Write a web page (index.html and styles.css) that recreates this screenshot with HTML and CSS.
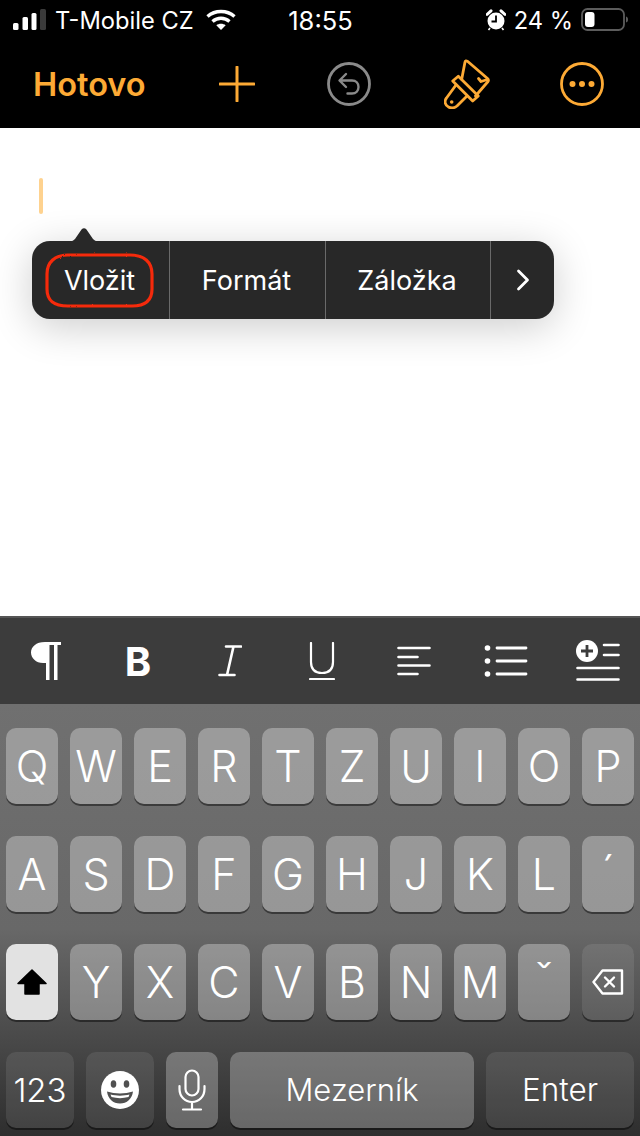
FILE: index.html
```html
<!DOCTYPE html>
<html lang="cs">
  <head>
    <meta charset="UTF-8" />
    <meta name="viewport" content="width=device-width, initial-scale=1.0" />
    <title>Pages</title>
    <link rel="stylesheet" href="styles.css">
  </head>
  <body>
    <div class="phone">
      <div class="top">
        <div class="status">
          <div class="status-left">
            <svg class="signal" width="33" height="22" viewBox="0 0 33 22">
              <rect x="0" y="14" width="5.500" height="7" rx="1.500" fill="#fff"/>
              <rect x="9.500" y="8" width="5.500" height="13" rx="1.500" fill="#fff"/>
              <rect x="18.500" y="4" width="5" height="17" rx="1.500" fill="#fff"/>
              <rect x="27" y="0" width="6" height="21" rx="1.500" fill="#3a3a3a"/>
            </svg>
            <span class="carrier">T-Mobile CZ</span>
            <svg class="wifi" width="30" height="22" viewBox="0 0 30 22" fill="none" stroke="#fff" stroke-width="3.400">
              <path d="M1.500 7.500C9 .8 21 .8 28.500 7.500"/>
              <path d="M6.500 12.500C11.500 8.200 18.500 8.200 23.500 12.500"/>
              <path d="M15 21l-4.700-4.800c2.700-2 6.700-2 9.400 0z" fill="#fff" stroke="none"/>
            </svg>
          </div>
          <div class="status-time">18:55</div>
          <div class="status-right">
            <svg width="20" height="22" viewBox="0 0 20 22">
              <circle cx="10" cy="12" r="8.500" fill="#fff"/>
              <path d="M10 6.500V12.500H5.500" fill="none" stroke="#000" stroke-width="1.800"/>
              <path d="M1 5.500L5 1.800M19 5.500L15 1.800" stroke="#fff" stroke-width="3" stroke-linecap="round"/>
              <path d="M4 19l-1.500 2M16 19l1.500 2" stroke="#fff" stroke-width="1.600"/>
            </svg>
            <span class="battery-text">24 %</span>
            <svg width="47" height="24" viewBox="0 0 47 24">
              <rect x="1" y="1" width="42" height="21" rx="5.500" fill="none" stroke="#5c5c5c" stroke-width="1.800"/>
              <rect x="4" y="4" width="9.500" height="15" rx="3" fill="#fff"/>
              <path d="M45 8.500c1.600.5 2 1.500 2 3s-.4 2.500-2 3z" fill="#5c5c5c"/>
            </svg>
          </div>
        </div>
        <div class="toolbar">
          <span class="done">Hotovo</span>
          <svg class="tool-plus" width="36" height="36" viewBox="0 0 36 36" stroke="#fdaa35" stroke-width="3" stroke-linecap="round">
            <path d="M18 1V35M1 18H35"/>
          </svg>
          <svg class="tool-undo" width="44" height="44" viewBox="0 0 44 44" fill="none" stroke="#8a8a8a" stroke-width="2.800">
            <circle cx="22" cy="22" r="20.500"/>
            <path d="M19 12L12.500 18.500l6.500 6.500M13 18.500H25c4 0 6.500 3 6.500 6.500S29 31.500 25 31.500h-4.500" stroke-width="2.400" stroke-linecap="round" stroke-linejoin="round"/>
          </svg>
          <svg class="tool-brush" width="46" height="50" viewBox="0 0 46 50" fill="none" stroke="#fdaa35" stroke-width="2.800" stroke-linejoin="round" stroke-linecap="round">
            <path d="M17.700 20.300L21 3Q21.500 1 23.500 2.300L43.500 19.500Q45 21 44 22.500L31.500 37"/>
            <path d="M34.500 19.500L37 22.500L43.500 20.500"/>
            <path d="M8.700 22L14.300 17.300L34.300 37L28.700 42z"/>
            <path d="M12 26L2.500 39C0 42 1 46.500 4.500 48C7.500 49.500 10.500 49 13 47L23 37"/>
            <circle cx="7.700" cy="43" r="1.800" fill="#fdaa35" stroke="none"/>
          </svg>
          <svg class="tool-more" width="44" height="44" viewBox="0 0 44 44" fill="none" stroke="#fdaa35" stroke-width="2.800">
            <circle cx="22" cy="22" r="20.500"/>
            <circle cx="12.500" cy="22" r="3" fill="#fdaa35" stroke="none"/>
            <circle cx="22" cy="22" r="3" fill="#fdaa35" stroke="none"/>
            <circle cx="31.500" cy="22" r="3" fill="#fdaa35" stroke="none"/>
          </svg>
        </div>
      </div>

      <div class="document">
        <div class="caret"></div>
        <div class="menu">
          <svg class="menu-arrow" width="34" height="15" viewBox="0 0 34 15">
            <path d="M0 15C4 15 6 14 8 12L14.500 2.500Q17 0 19.500 2.500L26 12C28 14 30 15 34 15z" fill="#282828"/>
          </svg>
          <div class="menu-item menu-paste">Vložit</div>
          <div class="menu-item menu-format">Formát</div>
          <div class="menu-item menu-bookmark">Záložka</div>
          <div class="menu-item menu-next">
            <svg width="14" height="22" viewBox="0 0 14 22" fill="none" stroke="#fff" stroke-width="2.800" stroke-linecap="round" stroke-linejoin="round">
              <path d="M2.500 2l9 9-9 9"/>
            </svg>
          </div>
          <svg class="scribble" width="112" height="60" viewBox="0 0 112 60" fill="none" stroke="#f52a08" stroke-width="3.200">
            <filter id="rough" x="-5%" y="-5%" width="110%" height="110%">
              <feTurbulence type="fractalNoise" baseFrequency="0.5" numOctaves="2" seed="4"/>
              <feDisplacementMap in="SourceGraphic" scale="2"/>
            </filter>
            <path filter="url(#rough)" d="M24 3H86C100 3 108 10 108 22V37C108 49 100 54 88 54H24C10 54 3 49 3 37V22C3 10 11 3 24 3z"/>
          </svg>
        </div>
      </div>

      <div class="format-bar">
        <svg width="32" height="40" viewBox="0 0 32 40">
          <path d="M15 1H31V4H27.500V39H24V4H19.500V39H16V22H13C6 22 1 17 1 11.500S6 1 15 1z" fill="#fff"/>
        </svg>
        <span class="fmt-bold">B</span>
        <svg width="24" height="32" viewBox="0 0 24 32" fill="none" stroke="#fff" stroke-width="2.600" stroke-linecap="round">
          <path d="M8 1.500H23M1.500 30H16.500M15.500 1.500L9 30"/>
        </svg>
        <svg width="26" height="38" viewBox="0 0 26 38" fill="none" stroke="#fff" stroke-width="2.200" stroke-linecap="round">
          <path d="M2 1V20C2 27 6 31 13 31S24 27 24 20V1"/>
          <path d="M1 37H25"/>
        </svg>
        <svg width="34" height="30" viewBox="0 0 34 30" stroke="#fff" stroke-width="2.600" stroke-linecap="round">
          <path d="M1.500 2H32.500M1.500 11H20.500M1.500 19.500H32.500M1.500 28H20.500"/>
        </svg>
        <svg width="44" height="32" viewBox="0 0 44 32">
          <circle cx="3.500" cy="3" r="2.800" fill="#fff"/>
          <circle cx="3.500" cy="16" r="2.800" fill="#fff"/>
          <circle cx="3.500" cy="29" r="2.800" fill="#fff"/>
          <path d="M13 3H42M13 16H42M13 29H42" stroke="#fff" stroke-width="2.800" stroke-linecap="round"/>
        </svg>
        <svg width="44" height="42" viewBox="0 0 44 42">
          <circle cx="11" cy="11" r="11" fill="#fff"/>
          <path d="M11 5V17M5 11H17" stroke="#3c3c3c" stroke-width="2.800"/>
          <path d="M28 5H42.500M28 15H42.500M1.500 28H42.500M1.500 39.500H42.500" stroke="#fff" stroke-width="2.600" stroke-linecap="round"/>
        </svg>
      </div>

      <div class="keyboard">
        <div class="key-row">
          <div class="key">Q</div><div class="key">W</div><div class="key">E</div><div class="key">R</div><div class="key">T</div>
          <div class="key">Z</div><div class="key">U</div><div class="key">I</div><div class="key">O</div><div class="key">P</div>
        </div>
        <div class="key-row">
          <div class="key">A</div><div class="key">S</div><div class="key">D</div><div class="key">F</div><div class="key">G</div>
          <div class="key">H</div><div class="key">J</div><div class="key">K</div><div class="key">L</div><div class="key key-mark">´</div>
        </div>
        <div class="key-row">
          <div class="key key-shift">
            <svg width="30" height="26" viewBox="0 0 30 26">
              <path d="M15 1L29 14.500H22V25H8V14.500H1z" fill="#000" stroke="#000" stroke-width="1.500" stroke-linejoin="round"/>
            </svg>
          </div>
          <div class="key">Y</div><div class="key">X</div><div class="key">C</div><div class="key">V</div><div class="key">B</div>
          <div class="key">N</div><div class="key">M</div><div class="key key-mark">ˇ</div>
          <div class="key key-dark">
            <svg width="32" height="26" viewBox="0 0 32 26" fill="none" stroke="#fff" stroke-width="2.400" stroke-linejoin="round" stroke-linecap="round">
              <path d="M10.500 1.500H30V24.500H10.500L1.500 13z"/>
              <path d="M13 8.500l9 9M22 8.500l-9 9"/>
            </svg>
          </div>
        </div>
        <div class="key-row">
          <div class="key key-dark key-num">123</div>
          <div class="key key-dark key-emoji">
            <svg width="38" height="38" viewBox="0 0 38 38">
              <circle cx="19" cy="19" r="19" fill="#fff"/>
              <ellipse cx="12.500" cy="13" rx="2.800" ry="3.800" fill="#505050"/>
              <ellipse cx="25.500" cy="13" rx="2.800" ry="3.800" fill="#505050"/>
              <path d="M6 20.500C14 23 24 23 32 20.500C31 28 26 32.500 19 32.500S7 28 6 20.500z" fill="#505050"/>
              <path d="M9.500 23.500C15 25 23 25 28.500 23.500L27.500 26C22 27.500 16 27.500 10.500 26z" fill="#fff"/>
            </svg>
          </div>
          <div class="key key-mic">
            <svg width="28" height="42" viewBox="0 0 28 42" fill="none" stroke="#fff" stroke-width="2.200" stroke-linecap="round">
              <rect x="7.500" y="1.500" width="13" height="25" rx="6.500"/>
              <path d="M1.500 17V20C1.500 27.500 7 33 14 33S26.500 27.500 26.500 20V17M14 33V40M5 40.500H23"/>
            </svg>
          </div>
          <div class="key key-space">Mezerník</div>
          <div class="key key-dark key-enter">Enter</div>
        </div>
      </div>
    </div>
  </body>
</html>
```

FILE: styles.css
```css
body {
  margin: 0;
  font-family: Inter, Roboto, sans-serif;
  background: #fff;
  overflow: hidden;
}

.phone {
  width: 640px;
  height: 1136px;
  display: flex;
  flex-direction: column;
}

.top {
  height: 128px;
  background: #000;
  color: #fff;
}

.status {
  height: 40px;
  display: grid;
  grid-template-columns: 1fr auto 1fr;
  align-items: center;
  padding: 0 12px 0 13px;
  font-size: 23.700px;
}

.status-left {
  display: flex;
  align-items: center;
  gap: 9px;
}

.carrier {
  margin-right: 3px;
}

.status-time {
  font-size: 25.500px;
}

.status-right {
  display: flex;
  align-items: center;
  justify-content: flex-end;
  gap: 8px;
}

.toolbar {
  height: 88px;
  display: flex;
  align-items: center;
  padding: 0 0 2px 33px;
}

.done {
  width: 112px;
  font-size: 32.500px;
  font-weight: 600;
  white-space: nowrap;
  color: #fdaa35;
}

.tool-plus {
  margin-left: 74px;
}

.tool-undo {
  margin-left: 72px;
}

.tool-brush {
  margin-left: 73px;
}

.tool-more {
  margin-left: 70px;
}

.document {
  height: 488px;
  background: #fff;
  position: relative;
}

.caret {
  width: 4px;
  height: 36px;
  margin: 50px 0 0 39px;
  border-radius: 2px;
  background: #fed28f;
}

.menu {
  position: absolute;
  left: 32px;
  top: 113px;
  width: 522px;
  height: 78px;
  display: flex;
  background: #282828;
  border-radius: 18px;
  box-shadow: 0 8px 40px rgba(0, 0, 0, 0.2);
  color: #fff;
  font-size: 27px;
}

.menu-arrow {
  position: absolute;
  left: 35px;
  top: -14px;
}

.menu-item {
  display: flex;
  align-items: center;
  justify-content: center;
  border-right: 1px solid #6a6a6a;
  box-sizing: border-box;
}

.menu-paste {
  width: 138px;
  padding-right: 2px;
}

.menu-format {
  width: 156px;
  padding-right: 2px;
}

.menu-bookmark {
  width: 165px;
  padding-right: 2px;
}

.menu-next {
  flex: 1;
  border-right: none;
}

.scribble {
  position: absolute;
  left: 12px;
  top: 11px;
}

.format-bar {
  height: 88px;
  box-sizing: border-box;
  border-top: 2px solid #555;
  background: #3c3c3c;
  display: grid;
  grid-template-columns: repeat(7, 92px);
  align-items: center;
  justify-items: center;
}

.fmt-bold {
  font-size: 40px;
  font-weight: 700;
  color: #fff;
}

.keyboard {
  height: 432px;
  box-sizing: border-box;
  padding: 24px 6px 0;
  background: linear-gradient(#707070, #686868 52%, #2e2e2e);
  display: flex;
  flex-direction: column;
  gap: 32px;
}

.key-row {
  display: flex;
  gap: 12px;
}

.key {
  width: 52px;
  height: 76px;
  border-radius: 10px;
  background: rgba(255, 255, 255, 0.31);
  box-shadow: 0 2px 0 rgba(0, 0, 0, 0.45);
  display: flex;
  align-items: center;
  justify-content: center;
  color: #fff;
  font-size: 43px;
  font-weight: 300;
}

.key-mark {
  align-items: flex-start;
  padding-top: 8px;
  box-sizing: border-box;
  font-size: 46px;
}

.key-shift {
  background: #e2e2e2;
}

.key-dark {
  background: rgba(255, 255, 255, 0.09);
}

.key-num {
  width: 68px;
  font-size: 33px;
}

.key-emoji {
  width: 68px;
}

.key-mic {
  background: rgba(255, 255, 255, 0.27);
}

.key-space {
  width: 244px;
  font-size: 31px;
  padding-bottom: 2px;
  box-sizing: border-box;
  background: rgba(255, 255, 255, 0.27);
}

.key-enter {
  width: 148px;
  font-size: 31.500px;
  padding-bottom: 2px;
  box-sizing: border-box;
}
```
